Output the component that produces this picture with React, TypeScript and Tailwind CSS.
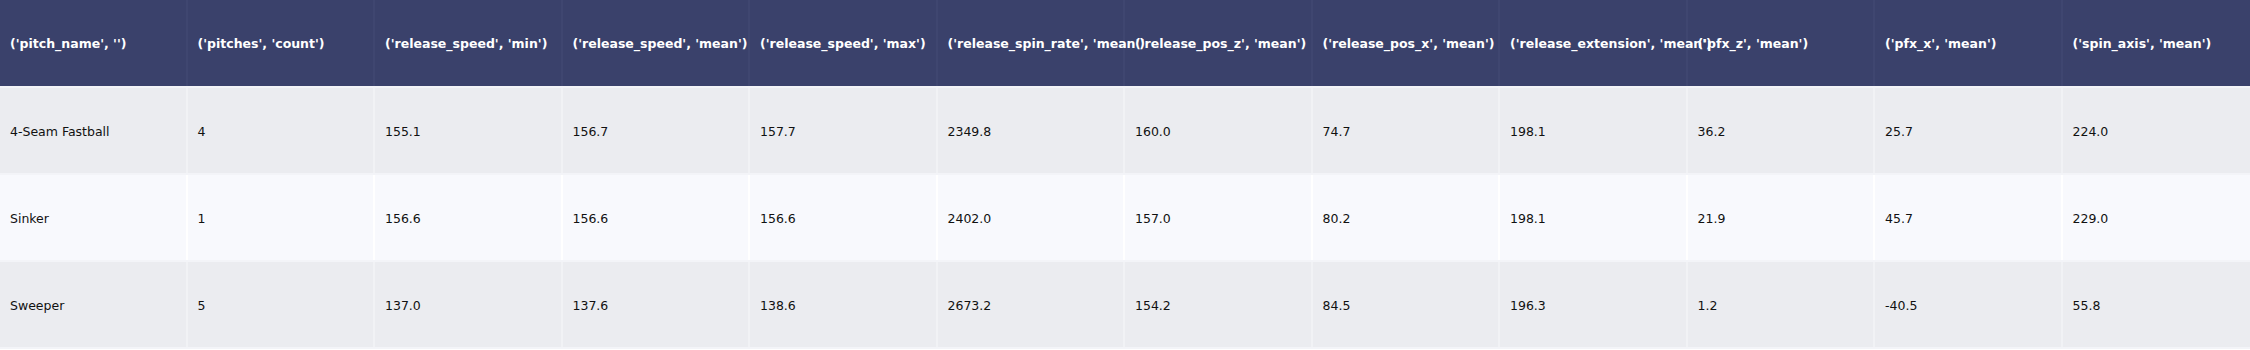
const columns = [
  "('pitch_name', '')",
  "('pitches', 'count')",
  "('release_speed', 'min')",
  "('release_speed', 'mean')",
  "('release_speed', 'max')",
  "('release_spin_rate', 'mean')",
  "('release_pos_z', 'mean')",
  "('release_pos_x', 'mean')",
  "('release_extension', 'mean')",
  "('pfx_z', 'mean')",
  "('pfx_x', 'mean')",
  "('spin_axis', 'mean')",
]

const rows = [
  ["4-Seam Fastball", "4", "155.1", "156.7", "157.7", "2349.8", "160.0", "74.7", "198.1", "36.2", "25.7", "224.0"],
  ["Sinker", "1", "156.6", "156.6", "156.6", "2402.0", "157.0", "80.2", "198.1", "21.9", "45.7", "229.0"],
  ["Sweeper", "5", "137.0", "137.6", "138.6", "2673.2", "154.2", "84.5", "196.3", "1.2", "-40.5", "55.8"],
]

export default function App() {
  return (
    <div
      className="w-[2250px] h-[350px] overflow-hidden bg-white text-[12.5px]"
      style={{ fontFamily: "'DejaVu Sans', Verdana, sans-serif" }}
    >
      <div className="grid grid-cols-12 h-[88px] bg-[#3a416b] border-b-2 border-[#f3f4f8]">
        {columns.map((c, i) => (
          <div
            key={i}
            className="flex items-center pl-[10px] pt-[2px] whitespace-nowrap font-bold text-white border-r-2 border-[#3f4670] last:border-r-0"
          >
            {c}
          </div>
        ))}
      </div>
      {rows.map((r, ri) => (
        <div
          key={ri}
          className={`grid grid-cols-12 h-[87px] border-b-2 border-[#f3f4f8] ${ri % 2 === 0 ? "bg-[#ebecf0]" : "bg-[#f8f9fd]"}`}
        >
          {r.map((v, i) => (
            <div
              key={i}
              className={`flex items-center pl-[10px] pt-[3px] whitespace-nowrap text-[#111111] border-r-2 last:border-r-0 ${ri % 2 === 0 ? "border-[#f1f2f5]" : "border-[#ffffff]"}`}
            >
              {v}
            </div>
          ))}
        </div>
      ))}
    </div>
  )
}
